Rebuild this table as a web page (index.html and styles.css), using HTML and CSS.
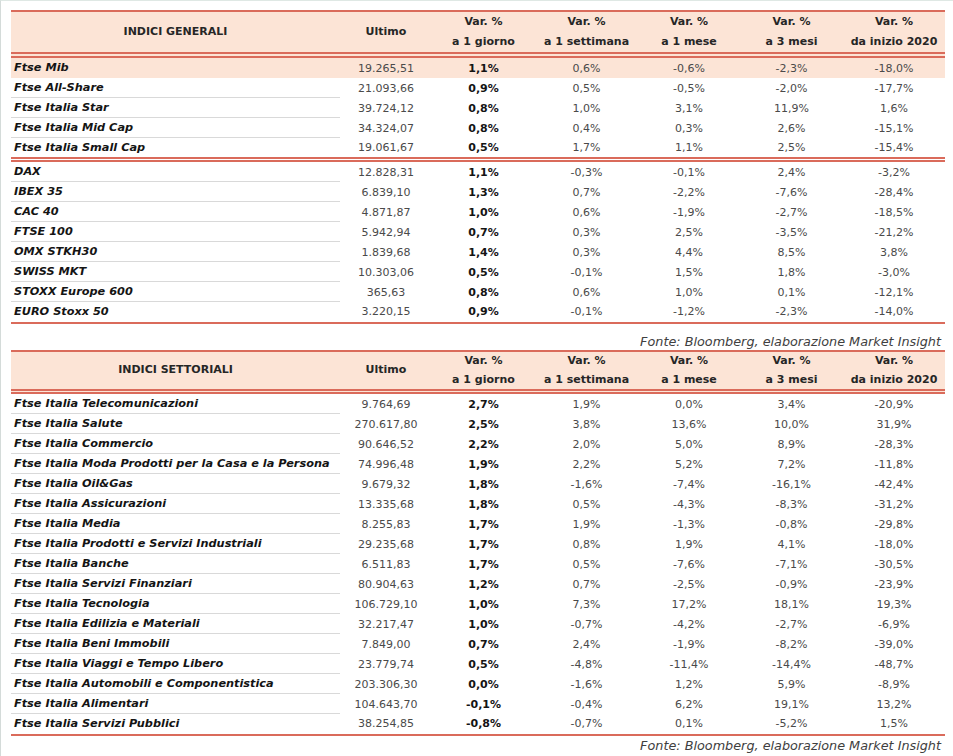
FILE: index.html
```html
<!DOCTYPE html>
<html lang="it">
<head>
<meta charset="utf-8">
<title>Indici</title>
<link rel="stylesheet" href="styles.css">
</head>
<body>
<div class="page">
  <table class="tbl tbl-gen">
    <colgroup>
      <col class="w-name"><col class="w-last"><col class="w-v1"><col class="w-v2"><col class="w-v3"><col class="w-v4"><col class="w-v5">
    </colgroup>
    <thead>
      <tr>
        <th>INDICI GENERALI</th>
        <th>Ultimo</th>
        <th>Var. %<br>a 1 giorno</th>
        <th>Var. %<br>a 1 settimana</th>
        <th>Var. %<br>a 1 mese</th>
        <th>Var. %<br>a 3 mesi</th>
        <th>Var. %<br>da inizio 2020</th>
      </tr>
    </thead>
    <tbody>
      <tr class="hl"><td class="name">Ftse Mib</td><td>19.265,51</td><td class="b">1,1%</td><td>0,6%</td><td>-0,6%</td><td>-2,3%</td><td>-18,0%</td></tr>
      <tr><td class="name">Ftse All-Share</td><td>21.093,66</td><td class="b">0,9%</td><td>0,5%</td><td>-0,5%</td><td>-2,0%</td><td>-17,7%</td></tr>
      <tr><td class="name">Ftse Italia Star</td><td>39.724,12</td><td class="b">0,8%</td><td>1,0%</td><td>3,1%</td><td>11,9%</td><td>1,6%</td></tr>
      <tr><td class="name">Ftse Italia Mid Cap</td><td>34.324,07</td><td class="b">0,8%</td><td>0,4%</td><td>0,3%</td><td>2,6%</td><td>-15,1%</td></tr>
      <tr class="grp-end"><td class="name">Ftse Italia Small Cap</td><td>19.061,67</td><td class="b">0,5%</td><td>1,7%</td><td>1,1%</td><td>2,5%</td><td>-15,4%</td></tr>
      <tr><td class="name">DAX</td><td>12.828,31</td><td class="b">1,1%</td><td>-0,3%</td><td>-0,1%</td><td>2,4%</td><td>-3,2%</td></tr>
      <tr><td class="name">IBEX 35</td><td>6.839,10</td><td class="b">1,3%</td><td>0,7%</td><td>-2,2%</td><td>-7,6%</td><td>-28,4%</td></tr>
      <tr><td class="name">CAC 40</td><td>4.871,87</td><td class="b">1,0%</td><td>0,6%</td><td>-1,9%</td><td>-2,7%</td><td>-18,5%</td></tr>
      <tr><td class="name">FTSE 100</td><td>5.942,94</td><td class="b">0,7%</td><td>0,3%</td><td>2,5%</td><td>-3,5%</td><td>-21,2%</td></tr>
      <tr><td class="name">OMX STKH30</td><td>1.839,68</td><td class="b">1,4%</td><td>0,3%</td><td>4,4%</td><td>8,5%</td><td>3,8%</td></tr>
      <tr><td class="name">SWISS MKT</td><td>10.303,06</td><td class="b">0,5%</td><td>-0,1%</td><td>1,5%</td><td>1,8%</td><td>-3,0%</td></tr>
      <tr><td class="name">STOXX Europe 600</td><td>365,63</td><td class="b">0,8%</td><td>0,6%</td><td>1,0%</td><td>0,1%</td><td>-12,1%</td></tr>
      <tr class="last"><td class="name">EURO Stoxx 50</td><td>3.220,15</td><td class="b">0,9%</td><td>-0,1%</td><td>-1,2%</td><td>-2,3%</td><td>-14,0%</td></tr>
    </tbody>
  </table>
  <div class="src src-1">Fonte: Bloomberg, elaborazione Market Insight</div>

  <table class="tbl tbl-set">
    <colgroup>
      <col class="w-name"><col class="w-last"><col class="w-v1"><col class="w-v2"><col class="w-v3"><col class="w-v4"><col class="w-v5">
    </colgroup>
    <thead>
      <tr>
        <th>INDICI SETTORIALI</th>
        <th>Ultimo</th>
        <th>Var. %<br>a 1 giorno</th>
        <th>Var. %<br>a 1 settimana</th>
        <th>Var. %<br>a 1 mese</th>
        <th>Var. %<br>a 3 mesi</th>
        <th>Var. %<br>da inizio 2020</th>
      </tr>
    </thead>
    <tbody>
      <tr><td class="name">Ftse Italia Telecomunicazioni</td><td>9.764,69</td><td class="b">2,7%</td><td>1,9%</td><td>0,0%</td><td>3,4%</td><td>-20,9%</td></tr>
      <tr><td class="name">Ftse Italia Salute</td><td>270.617,80</td><td class="b">2,5%</td><td>3,8%</td><td>13,6%</td><td>10,0%</td><td>31,9%</td></tr>
      <tr><td class="name">Ftse Italia Commercio</td><td>90.646,52</td><td class="b">2,2%</td><td>2,0%</td><td>5,0%</td><td>8,9%</td><td>-28,3%</td></tr>
      <tr><td class="name">Ftse Italia Moda Prodotti per la Casa e la Persona</td><td>74.996,48</td><td class="b">1,9%</td><td>2,2%</td><td>5,2%</td><td>7,2%</td><td>-11,8%</td></tr>
      <tr><td class="name">Ftse Italia Oil&amp;Gas</td><td>9.679,32</td><td class="b">1,8%</td><td>-1,6%</td><td>-7,4%</td><td>-16,1%</td><td>-42,4%</td></tr>
      <tr><td class="name">Ftse Italia Assicurazioni</td><td>13.335,68</td><td class="b">1,8%</td><td>0,5%</td><td>-4,3%</td><td>-8,3%</td><td>-31,2%</td></tr>
      <tr><td class="name">Ftse Italia Media</td><td>8.255,83</td><td class="b">1,7%</td><td>1,9%</td><td>-1,3%</td><td>-0,8%</td><td>-29,8%</td></tr>
      <tr><td class="name">Ftse Italia Prodotti e Servizi Industriali</td><td>29.235,68</td><td class="b">1,7%</td><td>0,8%</td><td>1,9%</td><td>4,1%</td><td>-18,0%</td></tr>
      <tr><td class="name">Ftse Italia Banche</td><td>6.511,83</td><td class="b">1,7%</td><td>0,5%</td><td>-7,6%</td><td>-7,1%</td><td>-30,5%</td></tr>
      <tr><td class="name">Ftse Italia Servizi Finanziari</td><td>80.904,63</td><td class="b">1,2%</td><td>0,7%</td><td>-2,5%</td><td>-0,9%</td><td>-23,9%</td></tr>
      <tr><td class="name">Ftse Italia Tecnologia</td><td>106.729,10</td><td class="b">1,0%</td><td>7,3%</td><td>17,2%</td><td>18,1%</td><td>19,3%</td></tr>
      <tr><td class="name">Ftse Italia Edilizia e Materiali</td><td>32.217,47</td><td class="b">1,0%</td><td>-0,7%</td><td>-4,2%</td><td>-2,7%</td><td>-6,9%</td></tr>
      <tr><td class="name">Ftse Italia Beni Immobili</td><td>7.849,00</td><td class="b">0,7%</td><td>2,4%</td><td>-1,9%</td><td>-8,2%</td><td>-39,0%</td></tr>
      <tr><td class="name">Ftse Italia Viaggi e Tempo Libero</td><td>23.779,74</td><td class="b">0,5%</td><td>-4,8%</td><td>-11,4%</td><td>-14,4%</td><td>-48,7%</td></tr>
      <tr><td class="name">Ftse Italia Automobili e Componentistica</td><td>203.306,30</td><td class="b">0,0%</td><td>-1,6%</td><td>1,2%</td><td>5,9%</td><td>-8,9%</td></tr>
      <tr><td class="name">Ftse Italia Alimentari</td><td>104.643,70</td><td class="b">-0,1%</td><td>-0,4%</td><td>6,2%</td><td>19,1%</td><td>13,2%</td></tr>
      <tr class="last"><td class="name">Ftse Italia Servizi Pubblici</td><td>38.254,85</td><td class="b">-0,8%</td><td>-0,7%</td><td>0,1%</td><td>-5,2%</td><td>1,5%</td></tr>
    </tbody>
  </table>
  <div class="src src-2">Fonte: Bloomberg, elaborazione Market Insight</div>
</div>
</body>
</html>
```

FILE: styles.css
```css
html, body {
  margin: 0;
  padding: 0;
  background: #ffffff;
}
body {
  border-top: 1px solid #dfe8e4;
  border-left: 1px solid #d4dbd9;
  min-height: 755px;
  font-family: "DejaVu Sans", "Liberation Sans", sans-serif;
  color: #222;
}
.page {
  padding: 9px 0 0 10px;
  width: 934px;
}
.tbl {
  width: 934px;
  table-layout: fixed;
  border-collapse: separate;
  border-spacing: 0;
}
.w-name { width: 329px; }
.w-last { width: 92px; }
.w-v1 { width: 103px; }
.w-v2 { width: 103px; }
.w-v3 { width: 102px; }
.w-v4 { width: 103px; }
.w-v5 { width: 102px; }

.tbl th {
  background: #fce4d6;
  border-top: 2px solid #da6b5b;
  border-bottom: 6px double #da6b5b;
  font-size: 11px;
  font-weight: bold;
  color: #262626;
  line-height: 20px;
  padding: 0;
  text-align: center;
  vertical-align: middle;
  white-space: nowrap;
}
.tbl-set th {
  line-height: 18.5px;
  border-bottom-width: 5px;
}
.tbl td {
  padding: 0;
  line-height: 19px;
  font-size: 11px;
  color: #4a4a4a;
  text-align: center;
  white-space: nowrap;
  vertical-align: middle;
}
.tbl td.name {
  text-align: left;
  padding-left: 3px;
  font-size: 11.3px;
  font-weight: bold;
  font-style: italic;
  color: #141414;
  border-bottom: 1px solid #d9d9d9;
}
.tbl td.b {
  font-weight: bold;
  color: #141414;
}
.tbl tr.hl td {
  background: #fce4d6;
}
.tbl tr.hl td.name {
  border-bottom-color: transparent;
}
.tbl tr.grp-end td {
  border-bottom: 5px double #da6b5b;
}
.tbl tr.last td {
  line-height: 20px;
  border-bottom: 2px solid #da6b5b;
}
.src {
  text-align: right;
  padding-right: 4px;
  font-style: italic;
  font-size: 12.8px;
  color: #404040;
  line-height: 16px;
}
.src-1 {
  margin-top: 10px;
}
.src-2 {
  margin-top: 2px;
}
```
